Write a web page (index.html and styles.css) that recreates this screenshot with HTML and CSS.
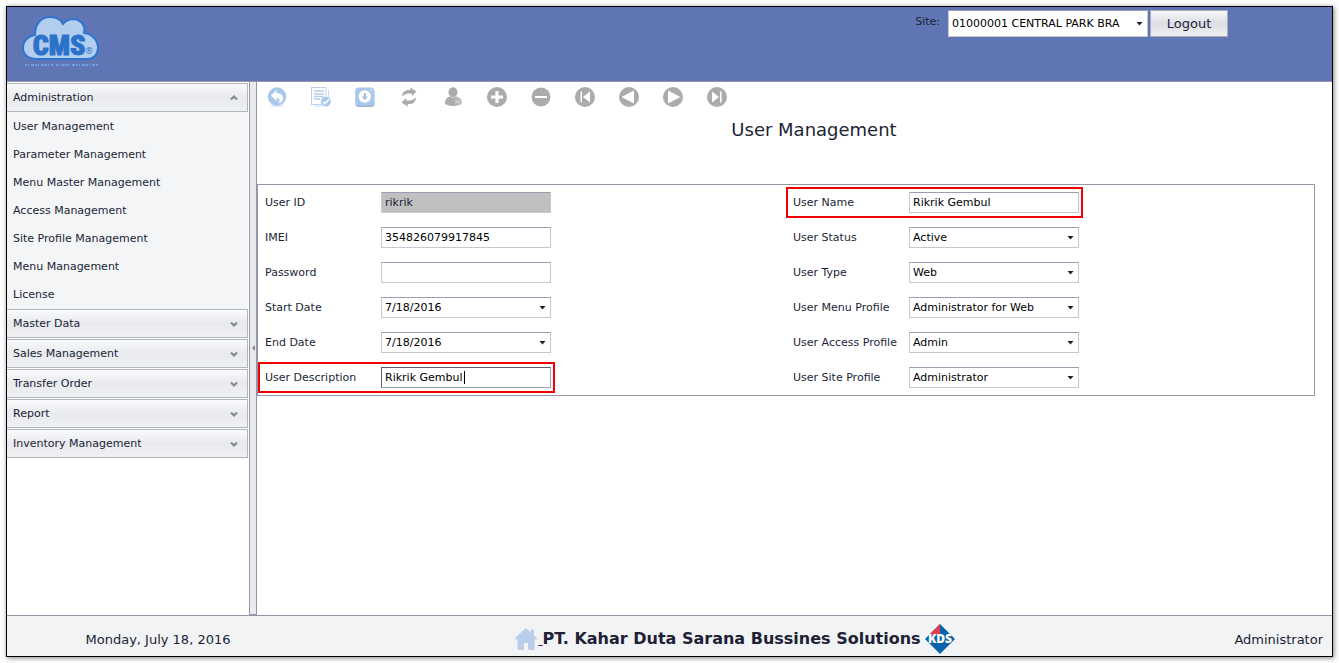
FILE: index.html
```html
<!DOCTYPE html>
<html lang="en">
<head>
<meta charset="utf-8">
<title>User Management</title>
<link rel="stylesheet" href="styles.css">
</head>
<body>
<div class="frame">
  <header class="header">
    <svg class="logo" width="80" height="54" viewBox="0 0 80 54" role="img" aria-label="CMS">
      <path d="M14 44C6 44 1 39 1 33C1 26 6 21 13 20C13 8 20 2 28 2C35 2 39 5 41 9C45 4 49 4 52 4C59 5 64 11 62 18C71 19 76 26 76 33C76 39 72 44 65 44Z" fill="#b3cdef" stroke="#2b76d2" stroke-width="2"/>
      <text class="logo-name" x="37" y="40" text-anchor="middle">CMS</text>
      <text class="logo-mark" x="67" y="39" text-anchor="middle">®</text>
      <path d="M3 50H31M34 50H77" stroke="#6ea0e4" stroke-width="2" stroke-dasharray="2 1 1 2 3 1"/>
    </svg>
    <div class="session">
      <label class="site-label" for="site">Site:</label>
      <span class="drop site-drop"><select class="control" id="site"><option>01000001 CENTRAL PARK BRA</option></select></span>
      <button class="logout" type="button">Logout</button>
    </div>
  </header>

  <div class="workspace">
    <nav class="sidebar">
      <section class="group">
        <button class="group-head" type="button" aria-expanded="true">Administration
          <svg width="8" height="6" viewBox="0 0 8 6"><path d="M1 4.500L4 1.500L7 4.500" fill="none" stroke="#85859a" stroke-width="2"/></svg></button>
        <ul class="menu">
          <li><a href="#">User Management</a></li>
          <li><a href="#">Parameter Management</a></li>
          <li><a href="#">Menu Master Management</a></li>
          <li><a href="#">Access Management</a></li>
          <li><a href="#">Site Profile Management</a></li>
          <li><a href="#">Menu Management</a></li>
          <li><a href="#">License</a></li>
        </ul>
      </section>
      <div class="closed-groups">
        <button class="group-head" type="button">Master Data <svg width="8" height="6" viewBox="0 0 8 6"><path d="M1 1.500L4 4.500L7 1.500" fill="none" stroke="#85859a" stroke-width="2"/></svg></button>
        <button class="group-head" type="button">Sales Management <svg width="8" height="6" viewBox="0 0 8 6"><path d="M1 1.500L4 4.500L7 1.500" fill="none" stroke="#85859a" stroke-width="2"/></svg></button>
        <button class="group-head" type="button">Transfer Order <svg width="8" height="6" viewBox="0 0 8 6"><path d="M1 1.500L4 4.500L7 1.500" fill="none" stroke="#85859a" stroke-width="2"/></svg></button>
        <button class="group-head" type="button">Report <svg width="8" height="6" viewBox="0 0 8 6"><path d="M1 1.500L4 4.500L7 1.500" fill="none" stroke="#85859a" stroke-width="2"/></svg></button>
        <button class="group-head" type="button">Inventory Management <svg width="8" height="6" viewBox="0 0 8 6"><path d="M1 1.500L4 4.500L7 1.500" fill="none" stroke="#85859a" stroke-width="2"/></svg></button>
      </div>
    </nav>
    <div class="splitter"><svg width="3" height="6" viewBox="0 0 3 6"><path d="M3 0V6L0 3Z" fill="#85859a"/></svg></div>

    <main class="content">
      <div class="toolbar">
        <button class="tool" type="button" aria-label="Back"><svg viewBox="0 0 20 20"><ellipse cx="10" cy="18.500" rx="7" ry="1.500" fill="#dce8f7"/><circle cx="10" cy="9.500" r="9.200" fill="#a9c8eb"/><path d="M4 8.500L9.500 3V6C14 6 16 8.300 16 11.500C16 14 14 16 11 16.500C13.500 14 13 11 9.500 11V14Z" fill="#fff"/></svg></button>
        <button class="tool" type="button" aria-label="Save list"><svg viewBox="0 0 20 20"><path d="M3 19H11M17.500 2.500V10" stroke="#c7d8f2" fill="none"/><rect x=".5" y=".5" width="14.500" height="17" fill="#fff" stroke="#bdd1f0"/><path d="M3 4H13M3 7H13M3 9.500H13M3 12H9" stroke="#b9cdf0" stroke-width="1.400"/><circle cx="14.800" cy="14.500" r="5.200" fill="#a6c6eb" stroke="#fff" stroke-width=".6"/><path d="M12 14.500L14 16.500L17.800 12.500" fill="none" stroke="#fff" stroke-width="1.700"/></svg></button>
        <button class="tool" type="button" aria-label="Download"><svg viewBox="0 0 20 20"><rect x=".5" y="1" width="19" height="19" rx="3" fill="#9bb5d6"/><rect x=".5" y=".5" width="18.500" height="18" rx="3" fill="#a9c8ec"/><circle cx="9.800" cy="9.500" r="6.200" fill="#fff"/><path d="M8.800 6H10.800V9.500H13L9.800 13L6.600 9.500H8.800Z" fill="#9dbfe6"/><circle cx="16.500" cy="3" r=".8" fill="#fff"/></svg></button>
        <button class="tool" type="button" aria-label="Refresh"><svg viewBox="0 0 20 20"><path d="M3 9.500C3 4.500 6.500 2.500 11.500 3L11 .3L17.500 4.500L13 9L12.500 6.600C8.500 6 5.500 7 3 9.500ZM17 10.500C17 15.500 13.500 17.500 8.500 17L9 19.700L2.500 15.500L7 11L7.500 13.400C11.500 14 14.500 13 17 10.500Z" fill="#a9abad"/></svg></button>
        <button class="tool" type="button" aria-label="User"><svg viewBox="0 0 20 20"><ellipse cx="10" cy="5.200" rx="4.500" ry="5" fill="#a9abad"/><path d="M2 17C2 11.500 5 9.500 7.500 9.500Q10 12 12.500 9.500C15 9.500 18 11.500 18 17Q10 21 2 17Z" fill="#a9abad"/><circle cx="15" cy="14.500" r="3.800" fill="#b8babc"/><path d="M12.500 13L15 16L17 13.500" stroke="#ddd" fill="none"/></svg></button>
        <button class="tool" type="button" aria-label="Add"><svg viewBox="0 0 20 20"><circle cx="10" cy="10" r="10" fill="#a9abad"/><path d="M10 4V16M4 10H16" stroke="#fff" stroke-width="3.200"/></svg></button>
        <button class="tool" type="button" aria-label="Remove"><svg viewBox="0 0 20 20"><circle cx="10" cy="10" r="9.400" fill="#a9abad"/><path d="M4 10H16" stroke="#fff" stroke-width="2"/></svg></button>
        <button class="tool" type="button" aria-label="First"><svg viewBox="0 0 20 20"><circle cx="10" cy="10" r="10" fill="#a9abad"/><path d="M5.500 4.500H7V15.500H5.500ZM15 4.500V15.500L8 10Z" fill="#fff"/></svg></button>
        <button class="tool" type="button" aria-label="Previous"><svg viewBox="0 0 20 20"><circle cx="10" cy="10" r="10" fill="#a9abad"/><path d="M15 3.500V16.500L2.500 10Z" fill="#fff"/></svg></button>
        <button class="tool" type="button" aria-label="Next"><svg viewBox="0 0 20 20"><circle cx="10" cy="10" r="10" fill="#a9abad"/><path d="M5 3.500V16.500L17.500 10Z" fill="#fff"/></svg></button>
        <button class="tool" type="button" aria-label="Last"><svg viewBox="0 0 20 20"><circle cx="10" cy="10" r="10" fill="#a9abad"/><path d="M13 4.500H14.500V15.500H13ZM5 4.500V15.500L12 10Z" fill="#fff"/></svg></button>
      </div>
      <h1 class="title">User Management</h1>
      <form class="panel">
        <div class="column">
          <div class="field"><label for="uid">User ID</label><input class="control locked" id="uid" value="rikrik" readonly></div>
          <div class="field"><label for="imei">IMEI</label><input class="control" id="imei" value="354826079917845"></div>
          <div class="field"><label for="pwd">Password</label><input class="control" id="pwd" type="password"></div>
          <div class="field"><label for="start">Start Date</label><span class="drop"><input class="control" id="start" value="7/18/2016"></span></div>
          <div class="field"><label for="end">End Date</label><span class="drop"><input class="control" id="end" value="7/18/2016"></span></div>
          <div class="field marked"><label for="desc">User Description</label><span class="editing"><input class="control active" id="desc" value="Rikrik Gembul"></span></div>
        </div>
        <div class="column">
          <div class="field marked"><label for="name">User Name</label><input class="control" id="name" value="Rikrik Gembul"></div>
          <div class="field"><label for="status">User Status</label><span class="drop"><select class="control" id="status"><option>Active</option></select></span></div>
          <div class="field"><label for="type">User Type</label><span class="drop"><select class="control" id="type"><option>Web</option></select></span></div>
          <div class="field"><label for="mprof">User Menu Profile</label><span class="drop"><select class="control" id="mprof"><option>Administrator for Web</option></select></span></div>
          <div class="field"><label for="aprof">User Access Profile</label><span class="drop"><select class="control" id="aprof"><option>Admin</option></select></span></div>
          <div class="field"><label for="sprof">User Site Profile</label><span class="drop"><select class="control" id="sprof"><option>Administrator</option></select></span></div>
        </div>
      </form>
    </main>
  </div>

  <footer class="footer">
    <span class="date">Monday, July 18, 2016</span>
    <div class="company">
      <a class="home" href="#" aria-label="Home"><svg width="24" height="24" viewBox="0 0 24 24"><path d="M12 2L1 12.500H4V23H10V16H14.500V23H20.500V12.500H23.500L20 9V3.500H17V6.500Z" fill="#c9ccd2"/><path d="M12 1L.5 11.500H3.500V22H9.500V15H14V22H20V11.500H23L19.500 8V2.500H16.500V5.500Z" fill="#b7cfed"/></svg>&nbsp;</a>
      <strong class="company-name">PT. Kahar Duta Sarana Bussines Solutions</strong>
      <svg class="kds" width="30" height="30" viewBox="0 0 30 30" role="img" aria-label="KDS"><path d="M15 0L30 15L15 30L0 15Z" fill="#0a61ac"/><path d="M15 0V11H4Z" fill="#e0404a"/><text class="kds-name" x="15" y="19" text-anchor="middle">KDS</text></svg>
    </div>
    <span class="role">Administrator</span>
  </footer>
</div>
</body>
</html>
```
FILE: styles.css
```css
* { box-sizing: border-box; }

body {
  margin: 0;
  padding: 6px;
  background: #fff;
  color: #201f35;
  font-family: "DejaVu Sans", Verdana, sans-serif;
  font-size: 11px;
}

button, input, select { font: inherit; color: inherit; margin: 0; }

.frame {
  display: flex;
  flex-direction: column;
  min-height: calc(100vh - 12px);
  border: 1px solid #000;
  background: #fff;
  box-shadow: 1px 1px 5px rgba(0, 0, 0, .5);
}

.header {
  display: flex;
  justify-content: space-between;
  align-items: flex-start;
  height: 75px;
  padding: 3px 104px 0 15px;
  background: #6075b3;
  border-bottom: 1px solid #9495a5;
}

.logo { margin-top: 5px; }
.logo-name {
  font-family: "Liberation Sans Narrow", "Roboto Condensed", Roboto, sans-serif;
  font-size: 28px;
  font-weight: 900;
  fill: #2b72ca;
  stroke: #2b72ca;
  stroke-width: 1px;
}
.logo-mark { font-size: 9px; fill: #2b72ca; }

.session { display: flex; gap: 2px; }
.site-label { padding: 5px 6px 0 0; }
.site-drop { width: 200px; }
.site-drop .control { height: 27px; }
.logout {
  width: 78px;
  height: 27px;
  padding: 0;
  border: 1px solid #a9acb5;
  background: linear-gradient(#f7f8f9, #dcdee4 50%, #eeeff2);
  font-size: 13px;
}

.workspace { display: flex; flex: 1; }

.sidebar { width: 242px; padding: 1px 1px 0 0; }
.group-head {
  display: flex;
  justify-content: space-between;
  align-items: center;
  width: 100%;
  height: 29px;
  padding: 0 9px 0 6px;
  border: 1px solid #b2b4be;
  border-left: 0;
  background: linear-gradient(#f9fafb, #e9eaee 50%, #eff0f2);
  text-align: left;
}
.menu { margin: 0; padding: 1px 0 0; list-style: none; background: #f3f5f6; }
.menu a {
  display: block;
  padding-left: 6px;
  color: inherit;
  line-height: 28px;
  text-decoration: none;
}
.closed-groups { display: grid; gap: 1px; }

.splitter {
  display: flex;
  align-items: center;
  justify-content: center;
  width: 8px;
  border: 1px solid #9495a5;
  border-top: 0;
  background: #e9eaee;
}

.content { flex: 1; min-width: 0; padding-right: 17px; }
.toolbar { display: flex; gap: 24px; padding: 5px 10px 0; }
.tool { width: 20px; height: 20px; padding: 0; border: 0; background: none; }
.tool svg { display: block; width: 20px; height: 20px; }

.title {
  margin: 11px 0 42px;
  padding-left: 56px;
  font-size: 18px;
  font-weight: 400;
  line-height: 24px;
  text-align: center;
}

.panel {
  display: grid;
  grid-template-columns: 1fr 1fr;
  padding: 2px 0;
  border: 1px solid #9495a5;
}
.column { display: grid; gap: 4px; justify-items: start; }
.field {
  display: flex;
  align-items: center;
  width: 297px;
  height: 31px;
  padding-left: 5px;
  border: 2px solid transparent;
}
.field label { width: 116px; white-space: nowrap; }
.marked { border-color: #f00000; }

.control {
  display: block;
  width: 170px;
  height: 21px;
  padding: 0 3px;
  border: 1px solid #c5c7d1;
  border-top-color: #9c9dae;
  border-radius: 0;
  background: #fff;
  color: #000;
  outline: 0;
  appearance: none;
}
.locked { background: #c0c0c0; color: #201f35; }
.active { border-color: #5b5e70 #a0a2b0 #a0a2b0 #5b5e70; }

.drop, .editing { position: relative; }
.drop .control { padding-right: 18px; }
.site-drop .control { width: 100%; }
.drop::after {
  content: "";
  position: absolute;
  top: calc(50% - 2px);
  right: 5px;
  width: 7px;
  height: 4px;
  background: #201f35;
  clip-path: polygon(0 0, 100% 0, 50% 100%);
  pointer-events: none;
}
.editing::after {
  content: "";
  position: absolute;
  top: 4px;
  left: 83px;
  width: 1px;
  height: 13px;
  background: #000;
}

.footer {
  display: grid;
  grid-template-columns: 302px 1fr 172px;
  align-items: center;
  height: 41px;
  padding-top: 6px;
  border-top: 1px solid #9495a5;
  background: #f1f3f4;
  font-size: 13px;
}
.date { text-align: center; }
.company { display: flex; align-items: center; justify-content: center; }
.home { display: flex; align-items: center; color: #3c1a80; text-decoration: underline; }
.company-name { padding-bottom: 2px; font-size: 16px; }
.kds { margin-left: 4px; }
.kds-name { font-family: "Open Sans", sans-serif; font-size: 12px; font-weight: 800; fill: #fff; }
.role { padding-right: 9px; text-align: right; }
```
